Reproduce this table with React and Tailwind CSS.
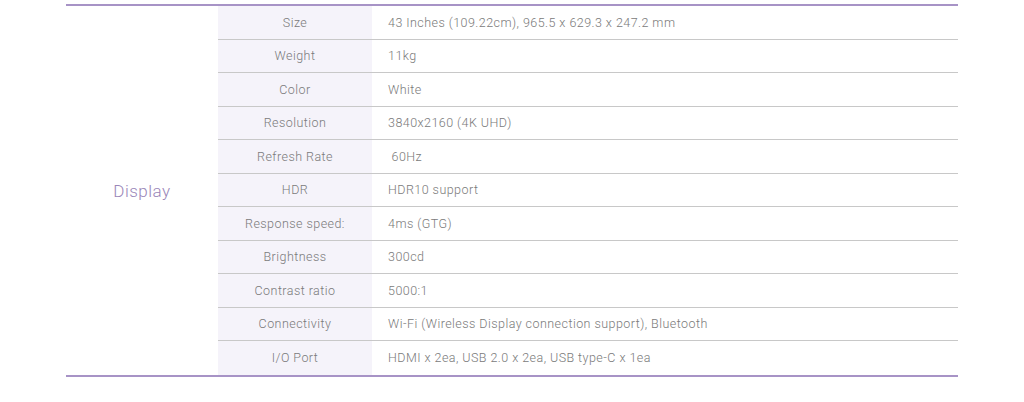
const rows = [
  ['Size', '43 Inches (109.22cm), 965.5 x 629.3 x 247.2 mm'],
  ['Weight', '11kg'],
  ['Color', 'White'],
  ['Resolution', '3840x2160 (4K UHD)'],
  ['Refresh Rate', '\u00a060Hz'],
  ['HDR', 'HDR10 support'],
  ['Response speed:', '4ms (GTG)'],
  ['Brightness', '300cd'],
  ['Contrast ratio', '5000:1'],
  ['Connectivity', 'Wi-Fi (Wireless Display connection support), Bluetooth'],
  ['I/O Port', 'HDMI x 2ea, USB 2.0 x 2ea, USB type-C x 1ea'],
];

export default function App() {
  return (
    <div className="w-[1024px] h-[402px] bg-white pt-1 font-['Roboto',sans-serif] font-light">
      <div className="ml-[66px] w-[892px] flex border-t-2 border-b-2 border-[#a793c6]">
        <div className="w-[152px] flex items-center justify-center pt-[2px] text-[17px] text-[#9a86b8] tracking-[0.5px]">
          Display
        </div>
        <div className="flex-1 flex flex-col">
          {rows.map(([label, value], i) => (
            <div
              key={label}
              className={`flex h-[33.5px] ${i < rows.length - 1 ? 'border-b border-[#c8c8c8]' : ''}`}
            >
              <div className="w-[154px] bg-[#f5f3fa] flex items-center justify-center pt-[2px] text-[12.5px] text-[#7a7a7a] tracking-[0.45px]">
                {label}
              </div>
              <div className="flex-1 flex items-center pl-4 pt-[2px] text-[12.5px] text-[#7a7a7a] tracking-[0.45px]">
                {value}
              </div>
            </div>
          ))}
        </div>
      </div>
    </div>
  );
}
